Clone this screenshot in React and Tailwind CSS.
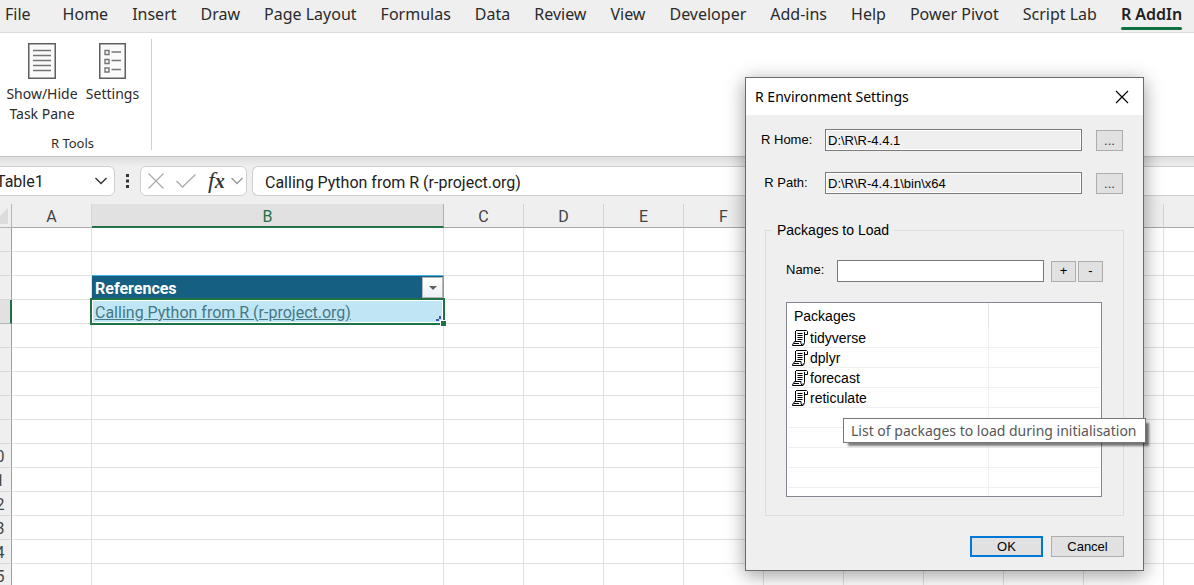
const TABS = [
  "File", "Home", "Insert", "Draw", "Page Layout", "Formulas", "Data", "Review",
  "View", "Developer", "Add-ins", "Help", "Power Pivot", "Script Lab", "R AddIn",
];
const COLUMNS = ["A", "B", "C", "D", "E", "F", "G", "H", "I", "J", "K", "L"];
const ROWS = Array.from({ length: 15 }, (_, i) => i + 1);
const PACKAGES = ["tidyverse", "dplyr", "forecast", "reticulate"];

function PageIcon() {
  return (
    <svg width="28" height="36" viewBox="0 0 28 36" fill="none" aria-hidden="true">
      <rect x="0.75" y="0.75" width="26.5" height="34.5" fill="#fafafa" stroke="#5f5f5f" strokeWidth="1.5" />
      <path d="M5 7.5h18M5 12.5h18M5 17.5h18M5 22.5h18M5 27.5h18" stroke="#757575" strokeWidth="1.3" />
    </svg>
  );
}

function ListIcon() {
  return (
    <svg width="28" height="36" viewBox="0 0 28 36" fill="none" aria-hidden="true">
      <rect x="0.75" y="0.75" width="25.5" height="34.5" fill="#fafafa" stroke="#5f5f5f" strokeWidth="1.5" />
      <path d="M6 7.500h4v4h-4zM6 16.500h4v4h-4zM6 25h4v4h-4z" stroke="#757575" strokeWidth="1.4" />
      <path d="M12.500 9h9.500M12.500 17.500h9.500M12.500 26.500h9.500" stroke="#757575" strokeWidth="1.4" />
    </svg>
  );
}

function Chevron({ className }) {
  return (
    <svg width="14" height="8" viewBox="0 0 14 8" fill="none" className={className} aria-hidden="true">
      <path d="M1.500 1l5.500 5.500L12.500 1" stroke="currentColor" strokeWidth="1.4" />
    </svg>
  );
}

function ScrollIcon() {
  return (
    <svg width="16" height="16" viewBox="0 0 16 16" fill="none" className="shrink-0" aria-hidden="true">
      <path d="M4 .5h10.500l1 1v3h-3v8l-1.500 3H1L.5 14l1.500-2.500h1V2z" fill="#fff" />
      <path d="M4 .5h10.500l1 1V4.500h-3M12.500 2v10.500l-1 2.500M3.500 1v10.500" stroke="#000" />
      <path d="M2.500 11.500h6.500v2l1 2M2.500 11.500L1.500 13.500H7M1 13.500L.5 15.500h10.500v-2" stroke="#000" />
      <path d="M5.500 3.500h5M5.500 5.500h5M5.500 7.500h5M5.500 9.500h5" stroke="#000" />
    </svg>
  );
}

function Ribbon() {
  return (
    <header className="font-['Noto_Sans',sans-serif]">
      <nav className="flex h-[33px] items-start gap-6 border-b border-[#dcdcdc] bg-[#efefef] pl-[5px]">
        {TABS.map((tab) => (
          <button
            key={tab}
            type="button"
            className={
              tab === "R AddIn"
                ? "relative h-[30px] whitespace-nowrap pb-0.5 text-base leading-6 font-semibold text-[#222] after:absolute after:inset-x-0 after:bottom-0 after:h-[3px] after:rounded-full after:bg-[#107040]"
                : "h-[30px] whitespace-nowrap pb-0.5 text-base leading-6 text-[#2b2b2b] first:mr-2"
            }
          >
            {tab}
          </button>
        ))}
      </nav>
      <div className="flex border-b border-[#c4c4c4] bg-white pt-1.5 pb-1.5">
        <section className="flex flex-col justify-between border-r border-[#cfcfcf] pt-1 pr-2.5 text-[#2b2b2b]">
          <div className="flex items-start gap-1 pl-1">
            <button type="button" className="flex w-[76px] flex-col items-center gap-[5px] text-sm leading-5">
              <PageIcon />
              <span className="whitespace-nowrap">Show/Hide<br />Task Pane</span>
            </button>
            <button type="button" className="flex w-[57px] flex-col items-center gap-[5px] text-sm leading-5">
              <ListIcon />
              Settings
            </button>
          </div>
          <h2 className="mt-3 pl-1 text-center text-[13px] leading-[14px]">R Tools</h2>
        </section>
        <div className="min-h-[111px] flex-1" />
      </div>
    </header>
  );
}

function FormulaBar() {
  return (
    <div className="-ml-5 flex items-center bg-linear-to-b from-[#dedede] via-[#efefef] via-20% to-[#efefef] pt-[9px] pb-2 font-[Roboto,sans-serif] text-base text-[#222]">
      <div className="flex h-[30px] w-[135px] items-center rounded-md border border-[#cfcfcf] bg-white pr-1.5 pl-[15px]">
        <input aria-label="Name box" defaultValue="Table1" className="min-w-0 flex-1 pt-0.5 outline-none" />
        <button type="button" aria-label="Open name list" className="text-[#333]"><Chevron /></button>
      </div>
      <svg width="3" height="16" viewBox="0 0 3 16" className="mx-[11px]" fill="#333" aria-hidden="true">
        <path d="M0 1h3v3H0zM0 6.500h3v3H0zM0 12h3v3H0z" />
      </svg>
      <div className="flex h-[30px] w-[107px] items-center rounded-md border border-[#cfcfcf] bg-white pr-0.5 pl-[7px]">
        <button type="button" aria-label="Cancel entry">
          <svg width="16" height="16" viewBox="0 0 16 16" fill="none" stroke="#ababab" strokeWidth="1.3"><path d="M.5.5l15 15M15.500.5l-15 15" /></svg>
        </button>
        <button type="button" aria-label="Accept entry" className="ml-3">
          <svg width="20" height="14" viewBox="0 0 20 14" fill="none" stroke="#ababab" strokeWidth="1.3"><path d="M.5 7l6 6L19.500.5" /></svg>
        </button>
        <button type="button" aria-label="Insert function" className="ml-3 font-['Liberation_Serif',serif] text-2xl leading-6 font-bold text-[#333] italic">
          <span className="font-normal">f</span><span className="text-xl">x</span>
        </button>
        <Chevron className="ml-auto text-[#999]" />
      </div>
      <input
        aria-label="Formula"
        defaultValue="Calling Python from R (r-project.org)"
        className="ml-[5px] h-[30px] min-w-0 flex-1 rounded-l-md border border-r-0 border-[#cfcfcf] bg-white pt-0.5 pl-3 outline-none"
      />
    </div>
  );
}

function ReferenceHeader() {
  return (
    <div className="flex h-[23px] items-center justify-between pl-[3px] text-base font-bold text-white">
      <span className="pt-0.5">References</span>
      <button type="button" aria-label="Filter References" className="flex h-[21px] w-[21px] items-center justify-center border border-[#b5b5b5] bg-linear-to-b from-white to-[#eef0f5]">
        <svg width="8" height="4" viewBox="0 0 8 4" fill="#606060"><path d="M0 0h8L4 4z" /></svg>
      </button>
    </div>
  );
}

function ReferenceLink() {
  return (
    <div className="relative h-[23px] pl-[3px]">
      <div className="absolute -inset-0.5 border-2 border-[#1f7246]">
        <div className="h-full border border-white" />
      </div>
      <svg width="5" height="5" viewBox="0 0 5 5" className="absolute right-0.5 bottom-0.5" fill="#3f51b5" aria-hidden="true">
        <path d="M3 0h2v3H3v2H0V3h3z" />
      </svg>
      <span className="absolute -right-[3px] -bottom-[3px] h-1.5 w-1.5 border-t border-l border-white bg-[#1f7246]" />
      <a href="#reference" className="relative block pt-0.5 text-base leading-[22px] text-[#467886] underline">
        Calling Python from R (r-project.org)
      </a>
    </div>
  );
}

function cellClass(col, row) {
  const base = "h-6 border-r border-b p-0 ";
  if (col === "B" && row === 3) return base + "border-[#44b3e1] bg-[#156082]";
  if (col === "B" && row === 4) return base + "border-[#e0e0e0] bg-[#c0e6f5]";
  if (col === "B" && row === 2) return base + "border-r-[#e0e0e0] border-b-[#44b3e1]";
  return base + "border-[#e0e0e0]";
}

function Sheet() {
  return (
    <table className="-ml-5 w-max table-fixed border-separate border-spacing-0 bg-white font-[Roboto,sans-serif] text-base leading-[21px]">
      <colgroup>
        <col className="w-8" />
        {COLUMNS.map((c) => <col key={c} className={c === "B" ? "w-[352px]" : "w-20"} />)}
      </colgroup>
      <thead>
        <tr className="bg-[#efefef] text-[#444]">
          <th className="h-6 w-8 border-r border-b border-[#b5b5b5] p-0">
            <svg width="16" height="16" viewBox="0 0 16 16" className="mr-[3px] ml-auto" fill="#dcdcdc" aria-hidden="true"><path d="M16 0v16H0z" /></svg>
          </th>
          {COLUMNS.map((c) => (
            <th
              key={c}
              scope="col"
              className={
                c === "B"
                  ? "h-6 min-w-[352px] border-r border-b-2 border-r-[#b0b0b0] border-b-[#1f7246] bg-[#e1e1e1] p-0 pt-[3px] leading-[19px] font-normal text-[#1f7246]"
                  : "h-6 min-w-20 border-r border-b border-r-[#d4d4d4] border-b-[#a8a8a8] p-0 pt-0.5 font-normal"
              }
            >
              {c}
            </th>
          ))}
        </tr>
      </thead>
      <tbody>
        {ROWS.map((r) => (
          <tr key={r}>
            <th
              scope="row"
              className={
                r === 4
                  ? "h-6 border-r-2 border-b border-r-[#1f7246] border-b-[#b5b5b5] bg-[#e1e1e1] p-0 pt-0.5 font-normal text-[#1f7246]"
                  : "h-6 border-r border-b border-r-[#a0a0a0] border-b-[#d8d8d8] bg-[#efefef] p-0 pt-0.5 font-normal text-[#444]"
              }
            >
              {r}
            </th>
            {COLUMNS.map((c) => (
              <td key={c} className={cellClass(c, r)}>
                {c === "B" && r === 3 && <ReferenceHeader />}
                {c === "B" && r === 4 && <ReferenceLink />}
              </td>
            ))}
          </tr>
        ))}
      </tbody>
    </table>
  );
}

function PathRow({ id, label, value }) {
  return (
    <div className="flex items-center pr-5 pl-[15px]">
      <label htmlFor={id} className="w-[50px] text-center whitespace-nowrap">{label}</label>
      <input id={id} readOnly defaultValue={value} className="ml-3.5 h-[22px] min-w-0 flex-1 border border-[#7a7a7a] bg-[#efefef] px-0.5 shadow-[inset_0_0_0_1px_#fff] outline-none" />
      <button type="button" aria-label={"Browse " + label} className="ml-3.5 h-[21px] w-[27px] border border-[#adadad] bg-[#e1e1e1] pt-0.5 leading-4 text-[#333]">...</button>
    </div>
  );
}

function PackageTable() {
  return (
    <div className="mt-5 mr-px h-[195px] overflow-hidden border border-[#828790] bg-white px-px">
      <table className="w-full table-fixed border-separate border-spacing-0 text-left text-sm leading-4">
        <colgroup>
          <col className="w-[201px]" />
          <col />
        </colgroup>
        <thead>
          <tr>
            <th scope="col" className="h-[25px] border-r border-[#e5e5e5] p-0 pl-1.5 font-normal">Packages</th>
            <th className="p-0" />
          </tr>
        </thead>
        <tbody>
          {PACKAGES.map((name) => (
            <tr key={name}>
              <td className="h-5 border-r border-b border-[#f0f0f0] p-0 pl-1">
                <span className="flex items-center gap-0.5"><ScrollIcon />{name}</span>
              </td>
              <td className="border-b border-[#f0f0f0] p-0" />
            </tr>
          ))}
          {[0, 1, 2, 3, 4].map((n) => (
            <tr key={n}>
              <td className="h-5 border-r border-b border-[#f0f0f0] p-0" />
              <td className="border-b border-[#f0f0f0] p-0" />
            </tr>
          ))}
        </tbody>
      </table>
    </div>
  );
}

function SettingsDialog() {
  return (
    <div
      role="dialog"
      aria-labelledby="dialog-title"
      className="absolute top-[77px] left-[745px] w-[399px] border border-[#6b6b6b] bg-[#efefef] font-['Liberation_Sans',sans-serif] text-[13px] leading-4 text-black shadow-[0_4px_18px_rgba(0,0,0,0.4)]"
    >
      <div className="flex h-[37px] items-center justify-between bg-white pr-3.5 pl-[9px]">
        <h1 id="dialog-title" className="font-['Noto_Sans',sans-serif] text-sm">R Environment Settings</h1>
        <button type="button" aria-label="Close">
          <svg width="14" height="14" viewBox="0 0 14 14" fill="none" stroke="#000" strokeWidth="1.2"><path d="M1 1l12 12M13 1L1 13" /></svg>
        </button>
      </div>
      <form className="pt-3.5 pb-[13px]" onSubmit={(e) => e.preventDefault()}>
        <div className="flex flex-col gap-[21px]">
          <PathRow id="r-home" label="R Home:" value="D:\R\R-4.4.1" />
          <PathRow id="r-path" label="R Path:" value="D:\R\R-4.4.1\bin\x64" />
        </div>
        <fieldset className="mx-[19px] mt-7 border border-[#dcdcdc] pb-[18px]">
          <legend className="ml-1.5 px-[5px] text-sm leading-4">Packages to Load</legend>
          <div className="px-5 pt-[22px]">
            <div className="flex items-center">
              <label htmlFor="package-name" className="w-[51px] pb-0.5">Name:</label>
              <input id="package-name" className="mr-[7px] h-[22px] min-w-0 flex-1 border border-[#7a7a7a] bg-white px-1 outline-none" />
              <button type="button" aria-label="Add package" className="mr-0.5 h-[21px] w-[25px] border border-[#adadad] bg-[#e1e1e1] leading-4">+</button>
              <button type="button" aria-label="Remove package" className="h-[21px] w-[25px] border border-[#adadad] bg-[#e1e1e1] leading-4">-</button>
            </div>
            <PackageTable />
          </div>
        </fieldset>
        <div className="mt-5 mr-[19px] flex justify-end gap-2">
          <button type="submit" className="h-[21px] w-[73px] border-2 border-[#0078d7] bg-[#e1e1e1] leading-4">OK</button>
          <button type="button" className="h-[21px] w-[73px] border border-[#adadad] bg-[#e1e1e1] leading-4">Cancel</button>
        </div>
      </form>
      <div
        role="tooltip"
        className="absolute top-[340px] left-[97px] border border-[#767676] bg-white pt-px pr-2 pb-px pl-[7px] font-['Noto_Sans',sans-serif] text-sm leading-[21px] whitespace-nowrap text-[#575757] shadow-[4px_4px_2px_-1px_rgba(0,0,0,0.5)]"
      >
        List of packages to load during initialisation
      </div>
    </div>
  );
}

export default function App() {
  return (
    <main className="relative h-screen overflow-hidden bg-[#efefef]">
      <Ribbon />
      <FormulaBar />
      <Sheet />
      <SettingsDialog />
    </main>
  );
}
